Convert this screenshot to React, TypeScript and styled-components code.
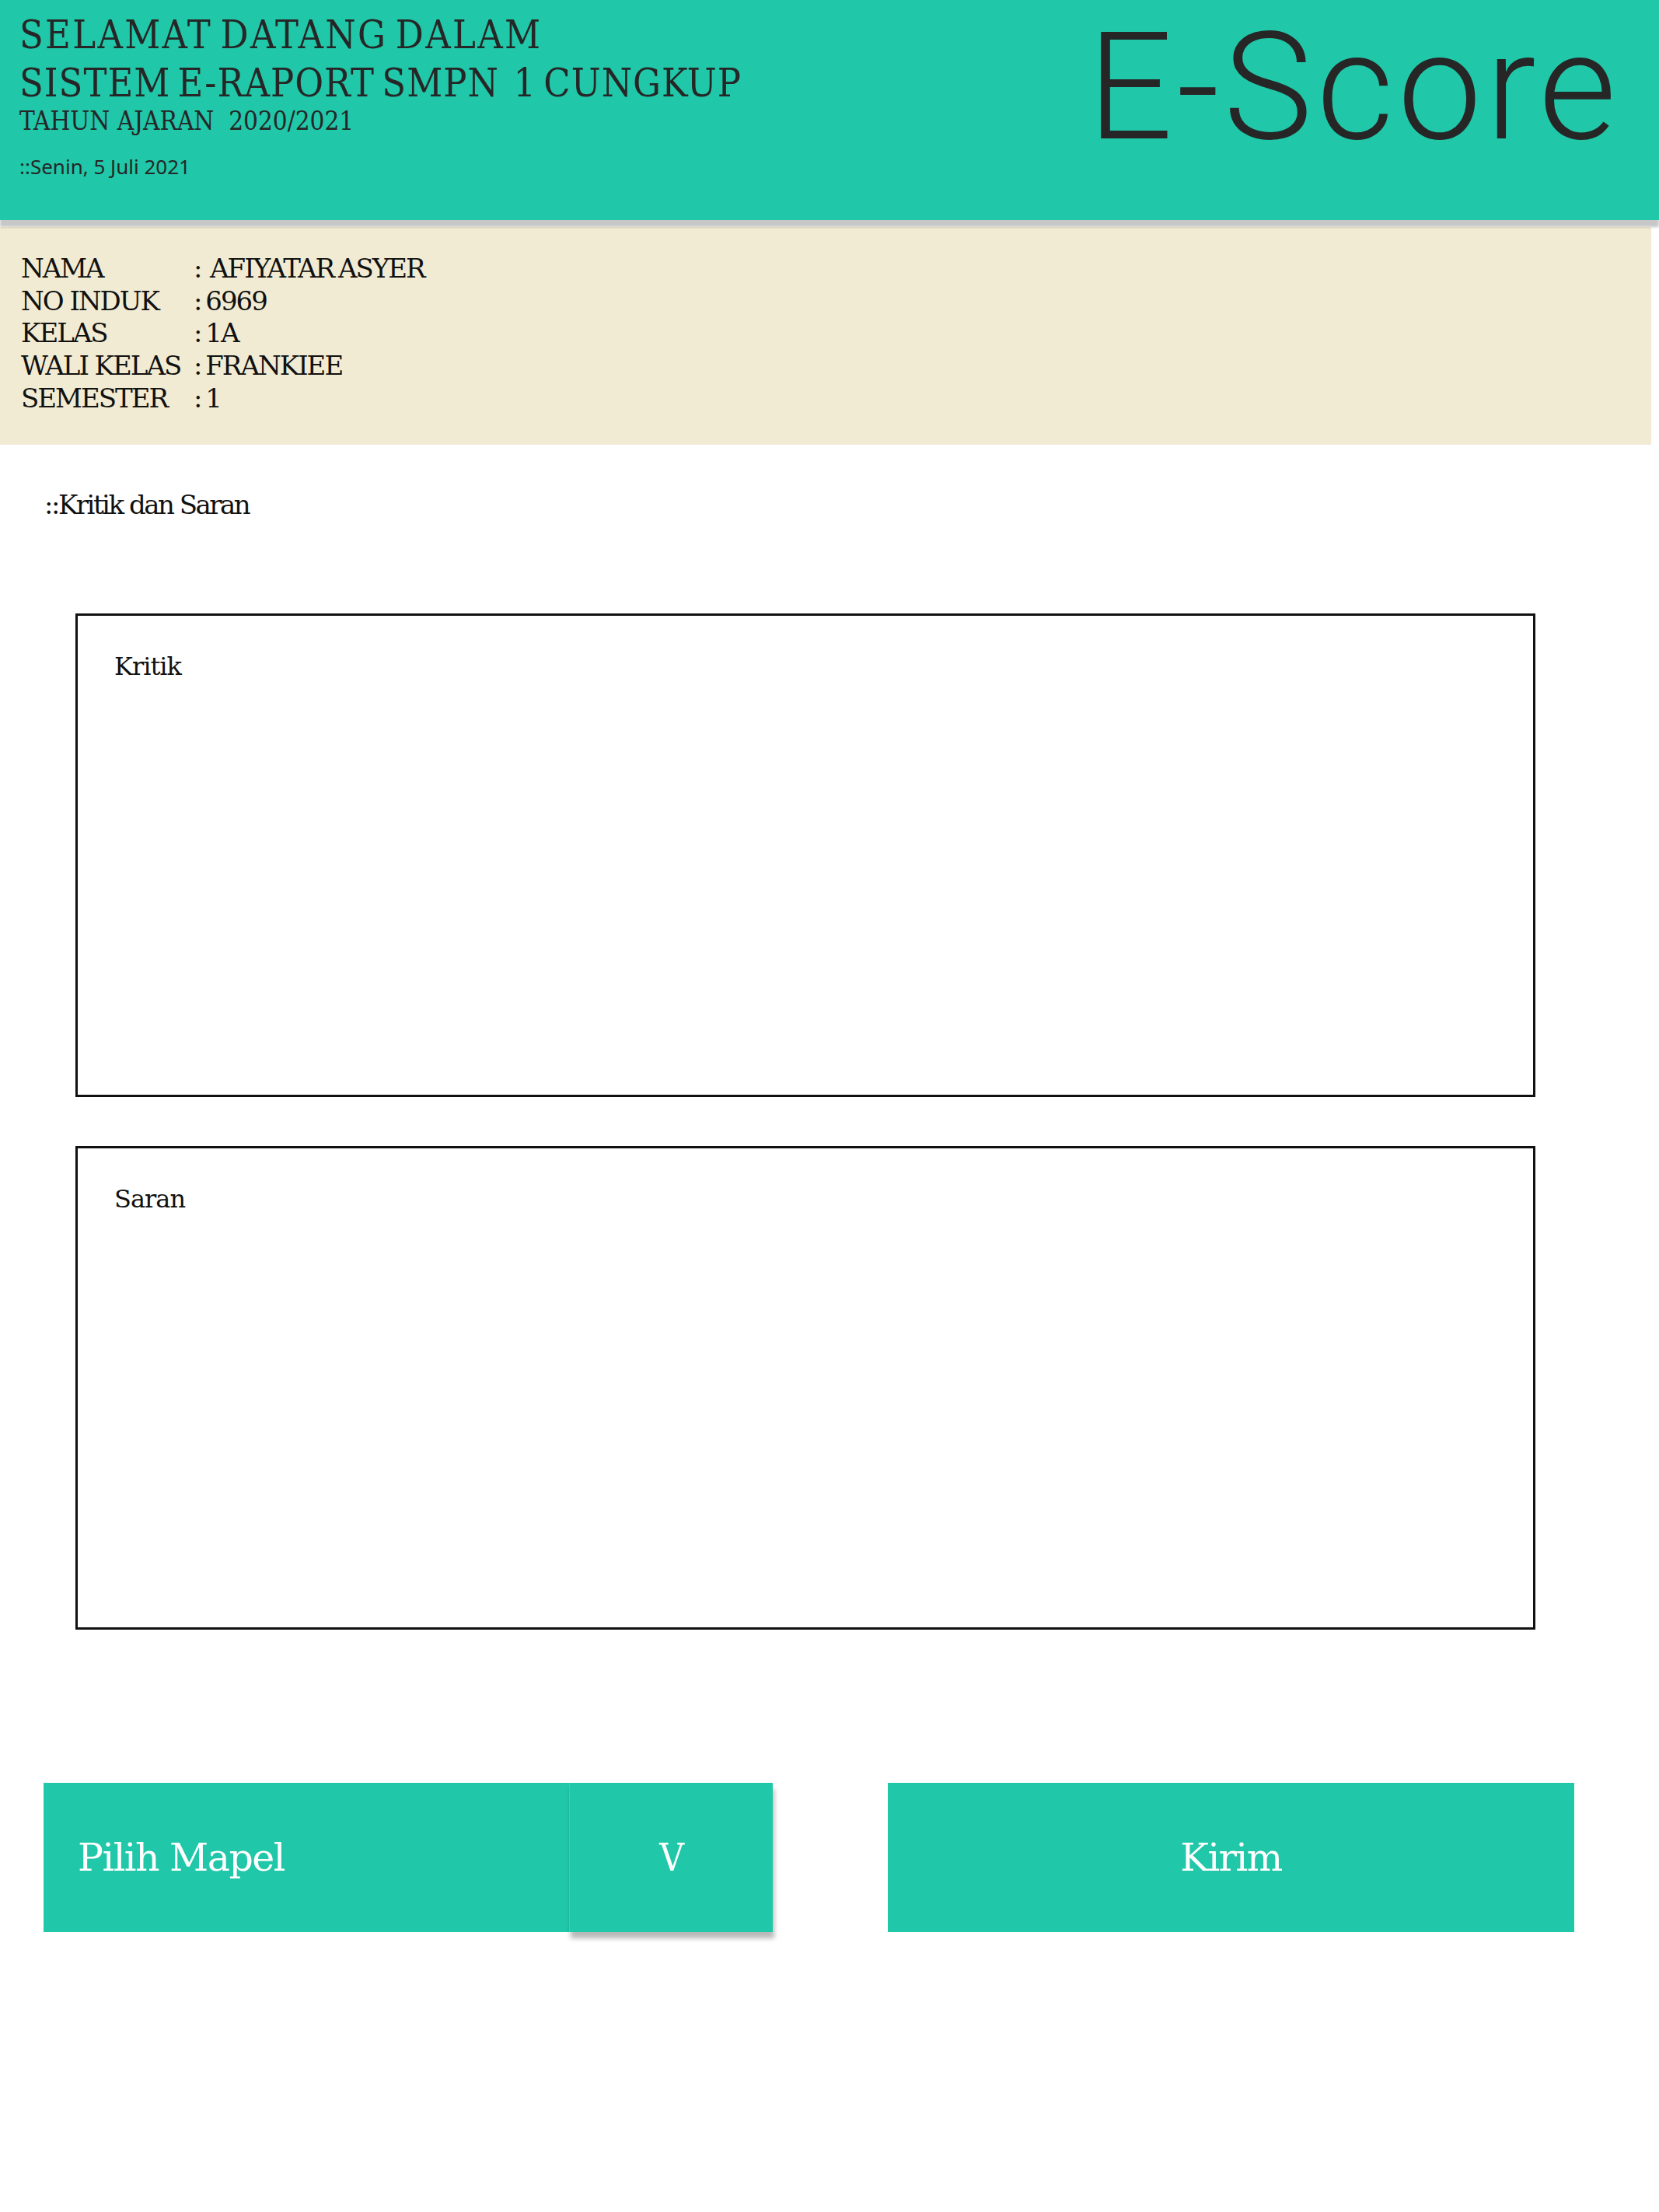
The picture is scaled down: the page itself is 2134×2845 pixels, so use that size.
import React from "react";
import styled, { createGlobalStyle } from "styled-components";

const GlobalStyle = createGlobalStyle`
  html, body {
    margin: 0;
    padding: 0;
    background: #ffffff;
  }
  body {
    width: 2134px;
    min-height: 2845px;
    font-family: "DejaVu Serif", serif;
  }
  * { box-sizing: border-box; }
`;

const TEAL = "#20c7a8";
const SLAB = `"DejaVu Serif", "Liberation Serif", serif`;

const Page = styled.div`
  width: 2134px;
  min-height: 2845px;
  display: flex;
  flex-direction: column;
`;

const Header = styled.header`
  position: relative;
  z-index: 2;
  height: 283px;
  background: ${TEAL};
  box-shadow: 0 9px 3px rgba(0, 0, 0, 0.22);
  display: flex;
  justify-content: space-between;
  align-items: flex-start;
`;

const Welcome = styled.div`
  padding: 14px 0 0 25px;
  display: flex;
  flex-direction: column;
  color: #262626;
  font-family: ${SLAB};
  font-stretch: condensed;
`;

const Title = styled.div<{ $spacing: number }>`
  font-size: 50px;
  line-height: 62px;
  letter-spacing: ${(p) => p.$spacing}px;
  word-spacing: -6px;
  white-space: pre;
`;

const Year = styled.div`
  font-size: 33px;
  line-height: 36px;
  white-space: pre;
`;

const DateLine = styled.div`
  margin-top: 24px;
  font-family: "Noto Sans", "Open Sans", sans-serif;
  font-size: 26px;
  line-height: 32px;
`;

const Logo = styled.div`
  padding-right: 50px;
  font-family: Roboto, "Open Sans", sans-serif;
  font-weight: 300;
  font-size: 193px;
  line-height: 224px;
  color: #262626;
  letter-spacing: 5px;
`;

const InfoPanel = styled.section`
  margin-top: 9px;
  width: 2124px;
  height: 280px;
  background: #f1ebd3;
  padding: 33px 0 0 27px;
  display: grid;
  grid-template-columns: 222px auto;
  grid-auto-rows: 41.7px;
  align-content: start;
  font-family: ${SLAB};
  font-size: 34px;
  line-height: 41.7px;
  color: #111111;
  letter-spacing: -2px;
`;

const InfoLabel = styled.div`
  white-space: pre;
`;

const InfoValue = styled.div`
  white-space: pre;
  word-spacing: -3px;
`;

const SectionTitle = styled.h2`
  margin: 57px 0 0 57px;
  font-family: ${SLAB};
  font-weight: 400;
  font-size: 34px;
  line-height: 40px;
  letter-spacing: -2.5px;
  color: #111111;
`;

const Boxes = styled.div`
  margin: 120px 0 0 97px;
  display: flex;
  flex-direction: column;
  gap: 63px;
`;

const TextBox = styled.div`
  width: 1878px;
  height: 622px;
  border: 3px solid #111111;
  padding: 45px 0 0 47px;
  font-family: ${SLAB};
  font-size: 32px;
  line-height: 40px;
  letter-spacing: -1px;
  color: #111111;
`;

const Actions = styled.div`
  margin: 197px 0 0 56px;
  display: flex;
  align-items: flex-start;
`;

const Select = styled.div`
  width: 938px;
  height: 192px;
  display: flex;
  background: ${TEAL};
`;

const ButtonText = styled.span`
  font-family: ${SLAB};
  font-size: 49px;
  line-height: 57px;
  letter-spacing: -1.5px;
  color: #ffffff;
`;

const SelectLabel = styled.div`
  flex: 1;
  display: flex;
  align-items: center;
  padding-left: 44px;
`;

const SelectToggle = styled.div`
  width: 262px;
  display: flex;
  align-items: center;
  justify-content: center;
  background: ${TEAL};
  border-left: 1px solid rgba(255, 255, 255, 0.12);
  box-shadow: 2px 8px 6px rgba(0, 0, 0, 0.28);
  font-stretch: condensed;
`;

const SubmitButton = styled.button`
  margin-left: 148px;
  width: 883px;
  height: 192px;
  border: none;
  padding: 0;
  background: ${TEAL};
  display: flex;
  align-items: center;
  justify-content: center;
  cursor: pointer;
`;

const info: [string, string][] = [
  ["NAMA", ":  AFIYATAR ASYER"],
  ["NO INDUK", ": 6969"],
  ["KELAS", ": 1A"],
  ["WALI KELAS", ": FRANKIEE"],
  ["SEMESTER", ": 1"],
];

export default function App() {
  return (
    <Page>
      <GlobalStyle />
      <Header>
        <Welcome>
          <Title $spacing={2.3}>SELAMAT DATANG DALAM</Title>
          <Title $spacing={1}>SISTEM E-RAPORT SMPN  1 CUNGKUP</Title>
          <Year>TAHUN AJARAN  2020/2021</Year>
          <DateLine>::Senin, 5 Juli 2021</DateLine>
        </Welcome>
        <Logo>E-Score</Logo>
      </Header>
      <InfoPanel>
        {info.map(([k, v]) => (
          <React.Fragment key={k}>
            <InfoLabel>{k}</InfoLabel>
            <InfoValue>{v}</InfoValue>
          </React.Fragment>
        ))}
      </InfoPanel>
      <SectionTitle>::Kritik dan Saran</SectionTitle>
      <Boxes>
        <TextBox>Kritik</TextBox>
        <TextBox>Saran</TextBox>
      </Boxes>
      <Actions>
        <Select>
          <SelectLabel>
            <ButtonText>Pilih Mapel</ButtonText>
          </SelectLabel>
          <SelectToggle>
            <ButtonText>V</ButtonText>
          </SelectToggle>
        </Select>
        <SubmitButton>
          <ButtonText>Kirim</ButtonText>
        </SubmitButton>
      </Actions>
    </Page>
  );
}
